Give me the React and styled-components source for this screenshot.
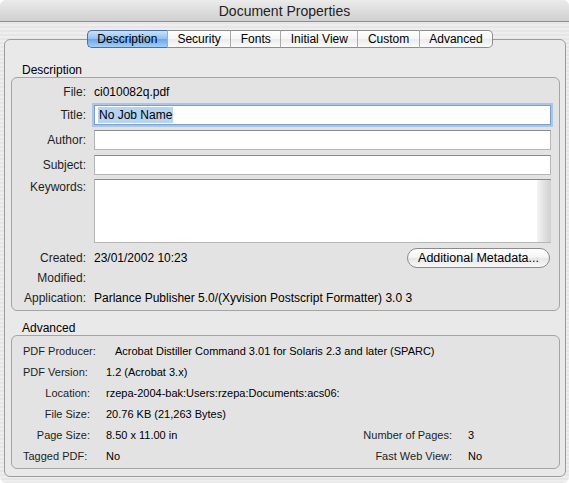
import React from "react";
import styled, { createGlobalStyle, css } from "styled-components";

const GlobalStyle = createGlobalStyle`
  html, body {
    margin: 0;
    padding: 0;
    background: #fff;
  }
  body {
    font-family: "Liberation Sans", Arial, sans-serif;
    font-size: 11px;
    color: #000;
  }
`;

const Window = styled.div`
  width: 569px;
  height: 483px;
  display: flex;
  flex-direction: column;
  border-radius: 6px;
  overflow: hidden;
  background: repeating-linear-gradient(
    to bottom,
    #eeeeee 0px,
    #eeeeee 2px,
    #e6e6e6 2px,
    #e6e6e6 4px
  );
`;

const TitleBar = styled.div`
  flex-shrink: 0;
  height: 21px;
  border-bottom: 1px solid #8e8e8e;
  background: linear-gradient(#ebebeb, #d0d0d0);
  display: flex;
  align-items: center;
  justify-content: center;
  font-size: 14px;
  color: #222;
`;

const Body = styled.div`
  flex: 1;
  display: flex;
  flex-direction: column;
  padding: 8px 3px 6px 4px;
  min-height: 0;
`;

const TabStrip = styled.div`
  position: relative;
  z-index: 1;
  display: flex;
  justify-content: center;
  height: 18px;
  padding-left: 10px;
  font-size: 12px;
`;

const Tab = styled.div`
  height: 18px;
  box-sizing: border-box;
  padding: 0 9.5px;
  display: flex;
  align-items: center;
  color: #000;
  border: 1px solid #8d8d8d;
  border-left-color: #aaaaaa;
  border-right-width: 0;
  background: linear-gradient(#ffffff 0%, #f6f6f6 50%, #ebebeb 51%, #fbfbfb 100%);

  &:first-child {
    border-radius: 5px 0 0 5px;
    border-left-color: #8d8d8d;
  }
  &:last-child {
    border-radius: 0 5px 5px 0;
    border-right-width: 1px;
  }

  ${(p) =>
    p.$active &&
    css`
      border-color: #4a70a6 !important;
      background: linear-gradient(#c9e1fa 0%, #93c2f1 48%, #6aa8e8 52%, #a2d0f8 100%);
    `}
`;

const Pane = styled.div`
  flex: 1;
  margin-top: -9px;
  border: 1px solid #9c9c9c;
  border-radius: 6px;
  background: #e9e9e9;
  padding: 23px 5px 0 6px;
`;

const GroupLabel = styled.div`
  height: 14px;
  line-height: 14px;
  padding-left: 11px;
  font-size: 12px;
  margin-top: ${(p) => p.$mt || 0}px;
`;

const GroupBox = styled.div`
  border: 1px solid #a4a4a4;
  border-radius: 6px;
  background: #e3e3e3;
  padding: ${(p) => p.$pad};
  font-size: ${(p) => p.$size || 11}px;
`;

const Row = styled.div`
  display: grid;
  grid-template-columns: 74px 1fr;
  column-gap: 8px;
  align-items: center;
  min-height: 14px;
  line-height: 14px;
  margin-top: ${(p) => p.$mt || 0}px;
`;

const Label = styled.div`
  text-align: right;
  color: #1e1e1e;
  white-space: nowrap;
  align-self: ${(p) => (p.$top ? "start" : "center")};
  padding-top: ${(p) => (p.$top ? "1px" : "0")};
`;

const Value = styled.div`
  white-space: nowrap;
  display: flex;
  align-items: center;
`;

const Field = styled.div`
  height: ${(p) => p.$h || 20}px;
  box-sizing: border-box;
  background: #fff;
  border: 1px solid #b6b6b6;
  border-top-color: #8a8a8a;
  display: flex;
  align-items: center;
  padding: 0 3px;

  ${(p) =>
    p.$focus &&
    css`
      border-color: #7b9ecb;
      box-shadow: 0 0 0 2px #a9c6e8;
    `}
`;

const Selected = styled.span`
  background: #b6d3f2;
  padding: 1px 1px;
`;

const TextArea = styled(Field)`
  align-items: stretch;
  padding: 0;
  border-right: none;
`;

const TextAreaInner = styled.div`
  flex: 1;
`;

const ScrollTrack = styled.div`
  width: 14px;
  background: linear-gradient(to right, #f4f4f4, #e4e4e4 45%, #cfcfcf 100%);
`;

const Button = styled.div`
  margin-left: auto;
  margin-right: 1px;
  height: 20px;
  box-sizing: border-box;
  padding: 0 10px;
  display: flex;
  align-items: center;
  border: 1px solid #8a8a8a;
  border-radius: 10px;
  font-size: 12.5px;
  background: linear-gradient(#ffffff 0%, #f4f4f4 50%, #e6e6e6 51%, #f8f8f8 100%);
  color: #000;
`;

const AdvRow = styled.div`
  display: grid;
  grid-template-columns: 78px 1fr auto 91px;
  column-gap: 16px;
  align-items: center;
  height: 21px;
`;

const AdvLabel = styled.div`
  text-align: ${(p) => (p.$left ? "left" : "right")};
  padding-left: ${(p) => (p.$left ? "11px" : "0")};
  color: #1e1e1e;
  white-space: nowrap;
`;

const AdvValue = styled.div`
  white-space: nowrap;
  grid-column: ${(p) => (p.$wide ? "2 / -1" : "auto")};
  padding-left: ${(p) => p.$indent || 0}px;
`;

const tabs = ["Description", "Security", "Fonts", "Initial View", "Custom", "Advanced"];

const advanced = [
  { label: "PDF Producer:", left: true, value: "Acrobat Distiller Command 3.01 for Solaris 2.3 and later (SPARC)", indent: 9 },
  { label: "PDF Version:", left: true, value: "1.2 (Acrobat 3.x)" },
  { label: "Location:", value: "rzepa-2004-bak:Users:rzepa:Documents:acs06:" },
  { label: "File Size:", value: "20.76 KB (21,263 Bytes)" },
  { label: "Page Size:", value: "8.50 x 11.00 in", right: "Number of Pages:", rightValue: "3" },
  { label: "Tagged PDF:", left: true, value: "No", right: "Fast Web View:", rightValue: "No" },
];

export default function App() {
  return (
    <>
      <GlobalStyle />
      <Window>
        <TitleBar>Document Properties</TitleBar>
        <Body>
          <TabStrip>
            {tabs.map((t, i) => (
              <Tab key={t} $active={i === 0}>
                {t}
              </Tab>
            ))}
          </TabStrip>
          <Pane>
            <GroupLabel>Description</GroupLabel>
            <GroupBox $pad="7px 8px 5px 0" $size={12}>
              <Row>
                <Label>File:</Label>
                <Value>ci010082q.pdf</Value>
              </Row>
              <Row $mt={6}>
                <Label>Title:</Label>
                <Field $focus>
                  <Selected>No Job Name</Selected>
                </Field>
              </Row>
              <Row $mt={5}>
                <Label>Author:</Label>
                <Field />
              </Row>
              <Row $mt={5}>
                <Label>Subject:</Label>
                <Field />
              </Row>
              <Row $mt={4}>
                <Label $top>Keywords:</Label>
                <TextArea $h={64}>
                  <TextAreaInner />
                  <ScrollTrack />
                </TextArea>
              </Row>
              <Row $mt={5}>
                <Label>Created:</Label>
                <Value>
                  23/01/2002 10:23
                  <Button>Additional Metadata...</Button>
                </Value>
              </Row>
              <Row $mt={3}>
                <Label>Modified:</Label>
                <Value />
              </Row>
              <Row $mt={6}>
                <Label>Application:</Label>
                <Value>Parlance Publisher 5.0/(Xyvision Postscript Formatter) 3.0 3</Value>
              </Row>
            </GroupBox>

            <GroupLabel $mt={10}>Advanced</GroupLabel>
            <GroupBox $pad="4px 0 2px 0">
              {advanced.map((r) => (
                <AdvRow key={r.label}>
                  <AdvLabel $left={r.left}>{r.label}</AdvLabel>
                  {r.right ? (
                    <>
                      <AdvValue>{r.value}</AdvValue>
                      <AdvLabel>{r.right}</AdvLabel>
                      <AdvValue>{r.rightValue}</AdvValue>
                    </>
                  ) : (
                    <AdvValue $wide $indent={r.indent}>
                      {r.value}
                    </AdvValue>
                  )}
                </AdvRow>
              ))}
            </GroupBox>
          </Pane>
        </Body>
      </Window>
    </>
  );
}
